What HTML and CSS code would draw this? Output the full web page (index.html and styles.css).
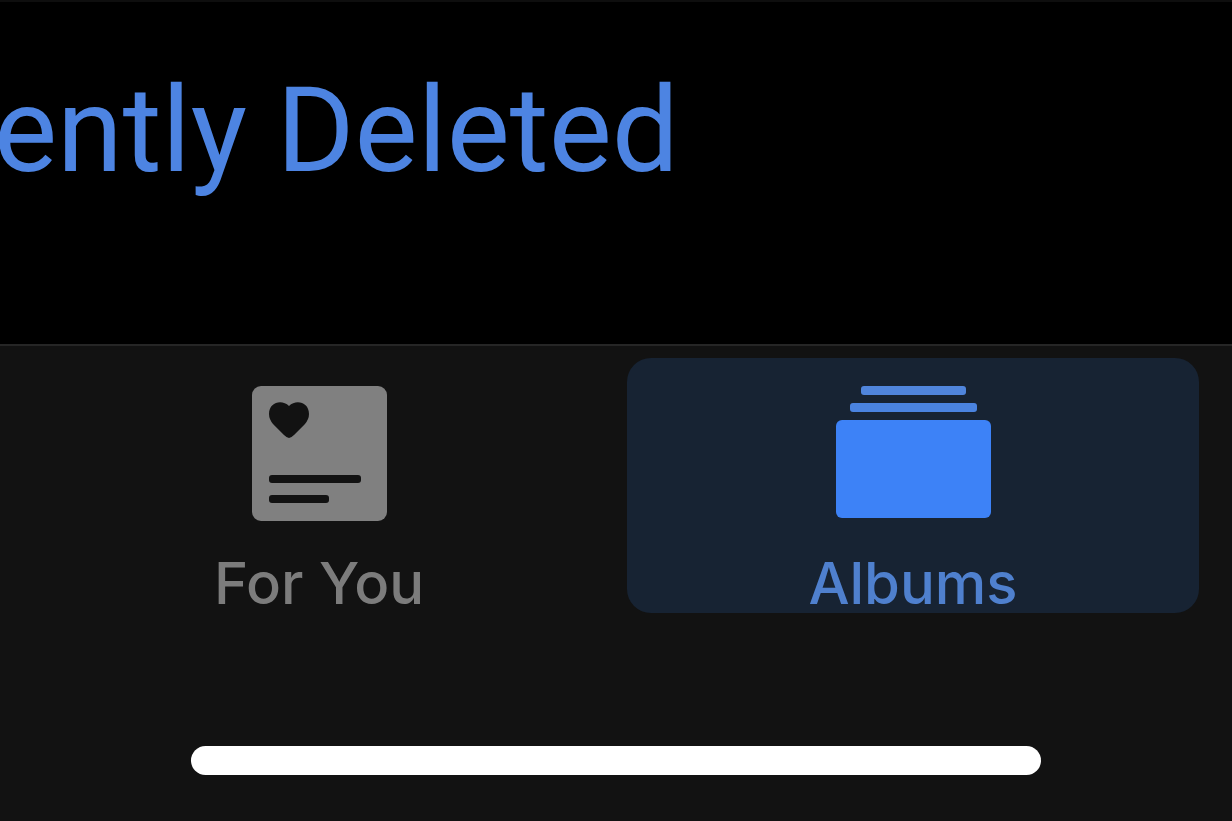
FILE: index.html
```
<!DOCTYPE html>
<html lang="en">
<head>
    <meta charset="UTF-8">
    <meta name="viewport" content="width=device-width, initial-scale=1.0">
    <title>Albums</title>
    <link rel="stylesheet" href="styles.css">
</head>
<body>
    <main class="album-list">
        <a class="album-link" href="#deleted">ently Deleted</a>
    </main>

    <footer class="bottom">
        <nav class="tabs">
            <a class="tab" href="#for-you">
                <svg class="tab-icon" width="136" height="136" viewBox="0 0 136 136" aria-hidden="true">
                    <rect x="1" y="1" width="135" height="135" rx="9" fill="#808080"/>
                    <path d="M38 53Q36 53 33 50L22 39Q18 34 18 29C18 17 31 14 38 21C45 14 58 17 58 29Q58 34 54 39L43 50Q40 53 38 53Z" fill="#121212"/>
                    <rect x="18" y="90" width="92" height="8" rx="3" fill="#121212"/>
                    <rect x="18" y="110" width="60" height="8" rx="3" fill="#121212"/>
                </svg>
                <span class="tab-label">For You</span>
            </a>
            <a class="tab active" href="#albums">
                <svg class="tab-icon" width="156" height="136" viewBox="0 0 156 136" aria-hidden="true">
                    <rect x="26" y="1" width="105" height="9" rx="3" fill="#5085dc"/>
                    <rect x="15" y="18" width="127" height="9" rx="3" fill="#4a83e0"/>
                    <rect x="1" y="35" width="155" height="98" rx="6" fill="#3d82f7"/>
                </svg>
                <span class="tab-label">Albums</span>
            </a>
        </nav>
        <div class="home-bar"></div>
    </footer>
</body>
</html>
```
FILE: styles.css
```
* {
    box-sizing: border-box;
}

body {
    margin: 0;
    min-height: 100vh;
    display: flex;
    flex-direction: column;
    background-color: #121212;
    font-family: Inter, "Liberation Sans", sans-serif;
    overflow-x: hidden;
}

.album-list {
    padding: 56px 0 140px;
    background-color: #000;
    border-top: 2px solid #0e0e0e;
}

.album-link {
    display: block;
    margin-left: -6px;
    font-family: Roboto, "Liberation Sans", sans-serif;
    font-size: 119px;
    line-height: 146px;
    white-space: nowrap;
    color: #4d84e2;
    text-decoration: none;
}

.bottom {
    flex: 1;
    border-top: 2px solid #262626;
    padding-top: 12px;
}

.tabs {
    display: grid;
    grid-template-columns: 1fr 1fr;
    gap: 22px;
    padding: 0 33px;
}

.tab {
    display: flex;
    flex-direction: column;
    align-items: center;
    padding-top: 27px;
    border-radius: 24px;
    color: #7c7c7c;
    text-decoration: none;
}

.active {
    background-color: #172333;
    color: #4f80ce;
}

.tab-icon {
    display: block;
}

.tab-label {
    margin-top: 32px;
    font-size: 58px;
    font-weight: 500;
    line-height: 60px;
}

.home-bar {
    width: 69%;
    height: 29px;
    margin: 133px auto 46px;
    border-radius: 15px;
    background-color: #fff;
}
```
